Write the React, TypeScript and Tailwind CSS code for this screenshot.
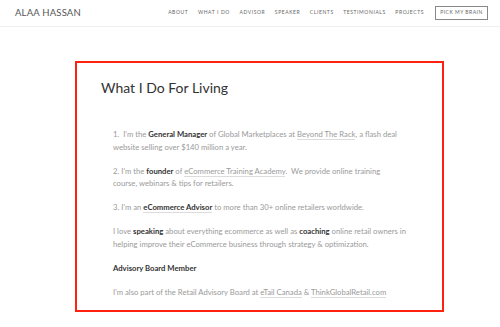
import React from 'react';

const navItems = ['About', 'What I Do', 'Advisor', 'Speaker', 'Clients', 'Testimonials', 'Projects'];

const Link: React.FC<{ children: React.ReactNode }> = ({ children }) => (
  <span className="border-b border-[#dcdcdc]">{children}</span>
);

const Strong: React.FC<{ children: React.ReactNode }> = ({ children }) => (
  <span className="font-bold text-[#333]">{children}</span>
);

export default function App() {
  return (
    <div className="w-[500px] h-[327px] bg-white overflow-hidden font-['Lato','Liberation_Sans',sans-serif]">
      <header className="h-[27px] border-b border-[#f0f0f0] flex items-center justify-between pl-[15px] pr-[12px]">
        <div className="text-[9.5px] tracking-[0.02em] text-[#555] uppercase">Alaa Hassan</div>
        <nav className="flex items-center">
          <ul className="flex items-center gap-[9.5px] mr-[11px]">
            {navItems.map(item => (
              <li key={item} className="text-[5px] uppercase tracking-[0.12em] text-[#666]">{item}</li>
            ))}
          </ul>
          <button className="h-[14px] w-[53px] border border-[#888] text-[5px] uppercase tracking-[0.1em] text-[#666] flex items-center justify-center">
            Pick My Brain
          </button>
        </nav>
      </header>

      <main className="pt-[34px] pl-[75px]">
        <section className="w-[369px] h-[251px] border-2 border-[#f21] pt-[15px] pl-[24px]">
          <h2 className="text-[14px] leading-[20px] text-[#333]">What I Do For Living</h2>
          <div className="mt-[30px] pl-[12px] whitespace-nowrap text-[7.7px] leading-[12.5px] text-[#9a9a9a] space-y-[11.5px]">
            <p>1.&nbsp; I'm the <Strong>General Manager</Strong> of Global Marketplaces at <Link>Beyond The Rack</Link>, a flash deal<br />website selling over $140 million a year.</p>
            <p>2. I'm the <Strong>founder</Strong> of <Link>eCommerce Training Academy</Link>.&nbsp; We provide online training<br />course, webinars &amp; tips for retailers.</p>
            <p>3. I'm an <Link><Strong>eCommerce Advisor</Strong></Link> to more than 30+ online retailers worldwide.</p>
            <p>I love <Strong>speaking</Strong> about everything ecommerce as well as <Strong>coaching</Strong> online retail owners in<br />helping improve their eCommerce business through strategy &amp; optimization.</p>
            <p><Strong>Advisory Board Member</Strong></p>
            <p>I'm also part of the Retail Advisory Board at <Link>eTail Canada</Link> &amp; <Link>ThinkGlobalRetail.com</Link></p>
          </div>
        </section>
      </main>
    </div>
  );
}
